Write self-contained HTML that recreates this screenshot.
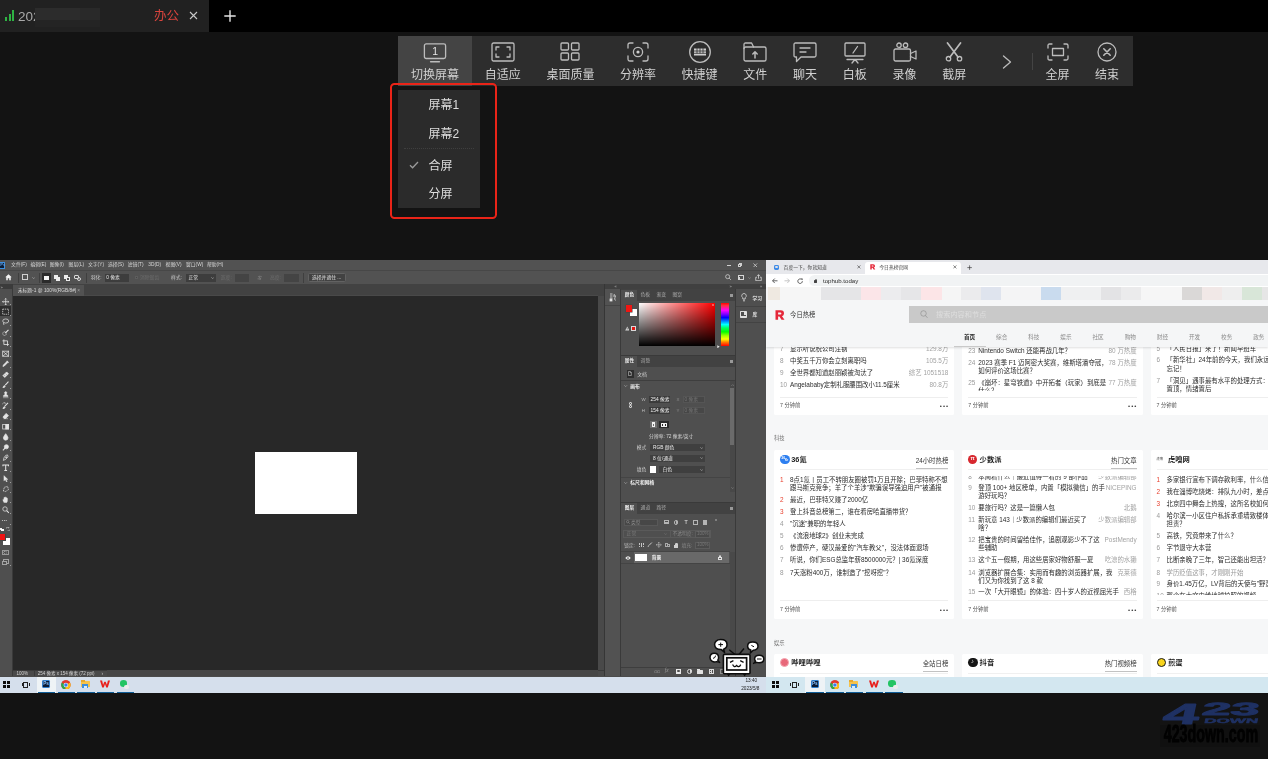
<!DOCTYPE html>
<html lang="zh-CN"><head><meta charset="utf-8"><title>remote</title>
<style>
html,body{margin:0;padding:0}
body{width:1268px;height:759px;overflow:hidden;background:#131313;position:relative;
font-family:"Liberation Sans","Noto Sans CJK SC",sans-serif;}
div,span,svg{position:absolute;box-sizing:border-box}
span{white-space:nowrap;line-height:1;display:block}
</style></head>
<body>
<div style="left:0;top:0;width:1268px;height:759px;overflow:hidden;will-change:transform">
<div style="left:0px;top:0px;width:1268px;height:32px;background:#000;"></div>
<div style="left:0px;top:0px;width:209px;height:32px;background:#212121;"></div>
<div style="left:5px;top:17px;width:2px;height:4px;background:#2fb344;"></div>
<div style="left:8.5px;top:13.5px;width:2px;height:7.5px;background:#2fb344;"></div>
<div style="left:12px;top:10px;width:2.3px;height:11px;background:#2fb344;"></div>
<span style="left:18px;top:9.5px;font-size:13.5px;color:#a9a9a9;">202</span>
<div style="left:35px;top:8px;width:65px;height:19px;background:#242424;"></div>
<div style="left:35px;top:8px;width:45px;height:12px;background:#2c2c2c;"></div>
<div style="left:80px;top:8px;width:20px;height:12px;background:#292929;"></div>
<span style="left:154px;top:9.5px;font-size:12.5px;color:#d9443d;">办公</span>
<svg style="left:189px;top:11px" width="9" height="9" viewBox="0 0 9 9"><path d="M1 1L8 8M8 1L1 8" stroke="#c8c8c8" stroke-width="1.1" fill="none"/></svg>
<svg style="left:223.6px;top:10px" width="12" height="12" viewBox="0 0 12 12"><path d="M6 0.3V11.7M0.3 6H11.7" stroke="#e4e4e4" stroke-width="1.4" fill="none"/></svg>
<div style="left:398px;top:36px;width:735px;height:49.5px;background:#2d2d2d;"></div>
<div style="left:398px;top:36px;width:74px;height:49.5px;background:#444444;"></div>
<span style="left:335px;width:200px;text-align:center;top:68.5px;font-size:12px;color:#d0d0d0;">切换屏幕</span>
<span style="left:402.8px;width:200px;text-align:center;top:68.5px;font-size:12px;color:#d0d0d0;">自适应</span>
<span style="left:470.4px;width:200px;text-align:center;top:68.5px;font-size:12px;color:#d0d0d0;">桌面质量</span>
<span style="left:537.9px;width:200px;text-align:center;top:68.5px;font-size:12px;color:#d0d0d0;">分辨率</span>
<span style="left:599.6px;width:200px;text-align:center;top:68.5px;font-size:12px;color:#d0d0d0;">快捷键</span>
<span style="left:655.3px;width:200px;text-align:center;top:68.5px;font-size:12px;color:#d0d0d0;">文件</span>
<span style="left:705px;width:200px;text-align:center;top:68.5px;font-size:12px;color:#d0d0d0;">聊天</span>
<span style="left:754.8px;width:200px;text-align:center;top:68.5px;font-size:12px;color:#d0d0d0;">白板</span>
<span style="left:804.5px;width:200px;text-align:center;top:68.5px;font-size:12px;color:#d0d0d0;">录像</span>
<span style="left:854.2px;width:200px;text-align:center;top:68.5px;font-size:12px;color:#d0d0d0;">截屏</span>
<span style="left:957.5px;width:200px;text-align:center;top:68.5px;font-size:12px;color:#d0d0d0;">全屏</span>
<span style="left:1007px;width:200px;text-align:center;top:68.5px;font-size:12px;color:#d0d0d0;">结束</span>
<div style="left:1032px;top:53px;width:1px;height:17px;background:#444;"></div>
<svg style="left:423px;top:42.4px" width="24" height="22" viewBox="0 0 24 22" fill="none" stroke="#bcbcbc" stroke-width="1.3" stroke-linecap="round" stroke-linejoin="round"><rect x="1.4" y="1.9" width="21.2" height="14.6" rx="1.8"/><path d="M7.6 19.8H16.4" stroke-width="1.5"/><text x="12.2" y="12.9" font-size="10.4" text-anchor="middle" fill="#e6e6e6" stroke="none" font-family="Liberation Sans,sans-serif">1</text></svg>
<svg style="left:490.8px;top:42px" width="24" height="20" viewBox="0 0 24 20" fill="none" stroke="#bcbcbc" stroke-width="1.3" stroke-linecap="round" stroke-linejoin="round"><rect x="1" y="1" width="22" height="18" rx="1.5"/><path d="M5 8V5H8M16 5H19V8M19 12V15H16M8 15H5V12"/></svg>
<svg style="left:560.4px;top:42px" width="20" height="19" viewBox="0 0 20 19" fill="none" stroke="#bcbcbc" stroke-width="1.3" stroke-linecap="round" stroke-linejoin="round"><rect x="1" y="1" width="7.5" height="7" rx="1"/><rect x="11.5" y="1" width="7.5" height="7" rx="1"/><rect x="1" y="11" width="7.5" height="7" rx="1"/><rect x="11.5" y="11" width="7.5" height="7" rx="1"/></svg>
<svg style="left:626.9px;top:42px" width="22" height="20" viewBox="0 0 22 20" fill="none" stroke="#bcbcbc" stroke-width="1.3" stroke-linecap="round" stroke-linejoin="round"><path d="M1 6V3Q1 1 3 1H6M16 1H19Q21 1 21 3V6M21 14V17Q21 19 19 19H16M6 19H3Q1 19 1 17V14"/><circle cx="11" cy="10" r="4.6"/><circle cx="11" cy="10" r="1.6" fill="#cfcfcf" stroke="none"/></svg>
<svg style="left:687.6px;top:41px" width="24" height="22" viewBox="0 0 24 22" fill="none" stroke="#bcbcbc" stroke-width="1.3" stroke-linecap="round" stroke-linejoin="round"><circle cx="12" cy="11" r="10.3"/><rect x="6" y="7.5" width="12" height="7" fill="#cfcfcf" stroke="none"/><path d="M6 10H18M6 12.3H18M9 7.5V12M12 7.5V12M15 7.5V12" stroke="#2d2d2d" stroke-width="0.8"/></svg>
<svg style="left:743.3px;top:42px" width="24" height="20" viewBox="0 0 24 20" fill="none" stroke="#bcbcbc" stroke-width="1.3" stroke-linecap="round" stroke-linejoin="round"><rect x="1" y="5" width="22" height="14" rx="1.6"/><path d="M1 6.5V2.5Q1 1 2.5 1H8.6L10.6 5"/><path d="M12 16V10M9.8 12L12 9.8L14.2 12" stroke-width="1.5"/></svg>
<svg style="left:793px;top:42px" width="24" height="21" viewBox="0 0 24 21" fill="none" stroke="#bcbcbc" stroke-width="1.3" stroke-linecap="round" stroke-linejoin="round"><path d="M2.5 1H21.5Q23 1 23 2.5V13.5Q23 15 21.5 15H8L3.5 19.5V15H2.5Q1 15 1 13.5V2.5Q1 1 2.5 1Z"/><path d="M7 6H17M7 10H13"/></svg>
<svg style="left:843.8px;top:42px" width="22" height="22" viewBox="0 0 22 22" fill="none" stroke="#bcbcbc" stroke-width="1.3" stroke-linecap="round" stroke-linejoin="round"><rect x="1" y="1" width="20" height="13" rx="1"/><path d="M3 17.5H19M8 21L11 17.5L14 21M9 11L13.5 4.5"/></svg>
<svg style="left:892.5px;top:42px" width="24" height="20" viewBox="0 0 24 20" fill="none" stroke="#bcbcbc" stroke-width="1.3" stroke-linecap="round" stroke-linejoin="round"><rect x="1" y="7" width="16.5" height="12" rx="1.5"/><path d="M17.5 11.5L23 9V17L17.5 14.5"/><circle cx="6" cy="3.2" r="2.2"/><circle cx="12.5" cy="3.2" r="2.2"/></svg>
<svg style="left:945.2px;top:42px" width="18" height="20" viewBox="0 0 18 20" fill="none" stroke="#bcbcbc" stroke-width="1.3" stroke-linecap="round" stroke-linejoin="round"><path d="M2.5 1L13 15M15.5 1L5 15" stroke-width="1.7"/><circle cx="3.5" cy="16.7" r="2.2"/><circle cx="14.5" cy="16.7" r="2.2"/></svg>
<svg style="left:1002px;top:54.5px" width="10" height="14" viewBox="0 0 10 14" fill="none" stroke="#bcbcbc" stroke-width="1.3" stroke-linecap="round" stroke-linejoin="round"><path d="M1.5 1L8.5 7L1.5 13"/></svg>
<svg style="left:1046.5px;top:43px" width="22" height="18" viewBox="0 0 22 18" fill="none" stroke="#bcbcbc" stroke-width="1.3" stroke-linecap="round" stroke-linejoin="round"><path d="M1 5V2.5Q1 1 2.5 1H5M17 1H19.5Q21 1 21 2.5V5M21 13V15.5Q21 17 19.5 17H17M5 17H2.5Q1 17 1 15.5V13"/><rect x="5.5" y="5.5" width="11" height="7"/></svg>
<svg style="left:1097px;top:42px" width="20" height="20" viewBox="0 0 20 20" fill="none" stroke="#bcbcbc" stroke-width="1.3" stroke-linecap="round" stroke-linejoin="round"><circle cx="10" cy="10" r="9"/><path d="M6.8 6.8L13.2 13.2M13.2 6.8L6.8 13.2" stroke-width="1.6"/></svg>
<div style="left:398px;top:89.5px;width:82px;height:118.5px;background:#2b2b2b;"></div>
<span style="left:428.5px;top:98.5px;font-size:12px;color:#dedede;">屏幕1</span>
<span style="left:428.5px;top:127.5px;font-size:12px;color:#dedede;">屏幕2</span>
<span style="left:428.5px;top:159.7px;font-size:12px;color:#dedede;">合屏</span>
<span style="left:428.5px;top:187.9px;font-size:12px;color:#dedede;">分屏</span>
<div style="left:404px;top:148px;width:70px;height:1px;background:transparent;border-top:1px dotted #3f3f3f;"></div>
<svg style="left:409px;top:160.5px" width="10" height="8" viewBox="0 0 10 8"><path d="M1 4.2L3.6 6.8L9 1" stroke="#9a9a9a" stroke-width="1.3" fill="none"/></svg>
<div style="left:389.9px;top:83px;width:107px;height:136.1px;background:transparent;border:2.6px solid #ea2418;border-radius:4.5px;"></div>
<div style="left:0px;top:260px;width:766px;height:432px;background:#4b4b4b;"></div>
<div style="left:0px;top:260px;width:766px;height:10.6px;background:#525252;"></div>
<div style="left:0px;top:261.5px;width:5.3px;height:7px;background:#0b1d36;border:0.8px solid #3d8fe0;border-left:none;"></div>
<span style="left:0.2px;top:262.9px;font-size:4.2px;color:#5f9ee0;font-weight:bold;">Ps</span>
<span style="left:11.1px;top:263.3px;font-size:4.8px;color:#d6d6d6;">文件(F)</span>
<span style="left:30.4px;top:263.3px;font-size:4.8px;color:#d6d6d6;">编辑(E)</span>
<span style="left:49.8px;top:263.3px;font-size:4.8px;color:#d6d6d6;">图像(I)</span>
<span style="left:68.6px;top:263.3px;font-size:4.8px;color:#d6d6d6;">图层(L)</span>
<span style="left:88px;top:263.3px;font-size:4.8px;color:#d6d6d6;">文字(Y)</span>
<span style="left:107.9px;top:263.3px;font-size:4.8px;color:#d6d6d6;">选择(S)</span>
<span style="left:127.8px;top:263.3px;font-size:4.8px;color:#d6d6d6;">滤镜(T)</span>
<span style="left:148.3px;top:263.3px;font-size:4.8px;color:#d6d6d6;">3D(D)</span>
<span style="left:165.6px;top:263.3px;font-size:4.8px;color:#d6d6d6;">视图(V)</span>
<span style="left:186px;top:263.3px;font-size:4.8px;color:#d6d6d6;">窗口(W)</span>
<span style="left:207px;top:263.3px;font-size:4.8px;color:#d6d6d6;">帮助(H)</span>
<div style="left:726.5px;top:265.4px;width:4px;height:0.8px;background:#d0d0d0;"></div>
<div style="left:738.5px;top:263.2px;width:3.2px;height:3.2px;background:transparent;border:0.6px solid #cfcfcf;"></div>
<div style="left:737.6px;top:264.2px;width:3.2px;height:3.2px;background:#525252;border:0.6px solid #cfcfcf;"></div>
<svg style="left:753px;top:262.6px" width="4.6" height="4.6" viewBox="0 0 5 5"><path d="M0.5 0.5L4.5 4.5M4.5 0.5L0.5 4.5" stroke="#d8d8d8" stroke-width="0.8"/></svg>
<div style="left:0px;top:271px;width:766px;height:13.4px;background:#525252;"></div>
<div style="left:0px;top:270.2px;width:766px;height:0.7px;background:#474747;"></div>
<svg style="left:4.8px;top:274.2px" width="7" height="6.6" viewBox="0 0 14 13"><path d="M7 0.5L0.5 6.5H2.5V12.5H5.5V8.5H8.5V12.5H11.5V6.5H13.5Z" fill="#f2f2f2"/></svg>
<div style="left:18.2px;top:272.5px;width:0.5px;height:10.5px;background:#3f3f3f;"></div>
<div style="left:21.8px;top:274.4px;width:6.6px;height:6px;background:transparent;border:0.8px dashed #cfcfcf;"></div>
<svg style="left:31.6px;top:277px" width="3.4" height="2.2" viewBox="0 0 6 4"><path d="M0.5 0.5L3 3L5.5 0.5" stroke="#bdbdbd" stroke-width="1" fill="none"/></svg>
<div style="left:38.6px;top:272.5px;width:0.5px;height:10.5px;background:#3f3f3f;"></div>
<div style="left:42px;top:273px;width:9px;height:9.6px;background:#2a2a2a;"></div>
<div style="left:44.4px;top:275.6px;width:4.2px;height:4.2px;background:#f4f4f4;"></div>
<div style="left:54px;top:275px;width:4px;height:4px;background:#ececec;"></div>
<div style="left:56px;top:277px;width:4px;height:4px;background:#ececec;"></div>
<div style="left:64.4px;top:275px;width:4px;height:4px;background:#ececec;"></div>
<div style="left:66.2px;top:276.8px;width:4.2px;height:4.2px;background:#525252;border:0.8px solid #ececec;"></div>
<div style="left:74.4px;top:275px;width:4.2px;height:4.2px;background:transparent;border:0.7px solid #d8d8d8;border-radius:1px;"></div>
<div style="left:76.6px;top:276.8px;width:4.4px;height:4.4px;background:transparent;border:0.7px solid #d8d8d8;border-radius:2.2px;"></div>
<div style="left:85.7px;top:272.5px;width:0.5px;height:10.5px;background:#3f3f3f;"></div>
<span style="left:90.7px;top:276.2px;font-size:4.8px;color:#cdcdcd;">羽化:</span>
<div style="left:105px;top:273.8px;width:24px;height:7.8px;background:#3d3d3d;"></div>
<span style="left:106.2px;top:276.2px;font-size:4.8px;color:#e6e6e6;">0 像素</span>
<span style="left:140px;top:276.2px;font-size:4.8px;color:#6c6c6c;">消除锯齿</span>
<div style="left:134.6px;top:275.6px;width:3.6px;height:3.6px;background:#454545;border:0.5px solid #5d5d5d;"></div>
<span style="left:171px;top:276.2px;font-size:4.8px;color:#cdcdcd;">样式:</span>
<div style="left:185.5px;top:273.8px;width:30px;height:7.8px;background:#3d3d3d;"></div>
<span style="left:188.4px;top:276.2px;font-size:4.8px;color:#e6e6e6;">正常</span>
<svg style="left:210.6px;top:277px" width="3.4" height="2.2" viewBox="0 0 6 4"><path d="M0.5 0.5L3 3L5.5 0.5" stroke="#bdbdbd" stroke-width="1" fill="none"/></svg>
<span style="left:220.8px;top:276.2px;font-size:4.8px;color:#6c6c6c;">宽度:</span>
<div style="left:235px;top:273.8px;width:14px;height:7.8px;background:#444;"></div>
<svg style="left:256.5px;top:274.6px" width="5.4" height="5.6" viewBox="0 0 10 10"><path d="M1 7H7M5 5L7 7L5 9M9 3H3M5 1L3 3L5 5" stroke="#8d8d8d" stroke-width="1.1" fill="none"/></svg>
<span style="left:270px;top:276.2px;font-size:4.8px;color:#6c6c6c;">高度:</span>
<div style="left:284px;top:273.8px;width:14.7px;height:7.8px;background:#444;"></div>
<div style="left:303.4px;top:272.5px;width:0.5px;height:10.5px;background:#3f3f3f;"></div>
<div style="left:307.6px;top:272.8px;width:38.4px;height:8.8px;background:#424242;border:0.6px solid #626262;border-radius:1.4px;"></div>
<span style="left:312px;top:276px;font-size:4.8px;color:#e2e2e2;">选择并遮住 ...</span>
<svg style="left:725.4px;top:274.4px" width="6.4" height="6.4" viewBox="0 0 12 12"><circle cx="5" cy="5" r="3.8" stroke="#d6d6d6" stroke-width="1.4" fill="none"/><path d="M8 8L11 11" stroke="#d6d6d6" stroke-width="1.6"/></svg>
<div style="left:737.8px;top:275px;width:5.8px;height:5.2px;background:transparent;border:0.8px solid #d6d6d6;"></div>
<div style="left:738.6px;top:276.6px;width:1.8px;height:2.8px;background:#d6d6d6;"></div>
<svg style="left:747.6px;top:276.8px" width="3.2" height="2.2" viewBox="0 0 6 4"><path d="M0.5 0.5L3 3L5.5 0.5" stroke="#a5a5a5" stroke-width="1" fill="none"/></svg>
<svg style="left:755.2px;top:273.6px" width="7" height="7.4" viewBox="0 0 14 14"><path d="M4 6H1.5V13H12.5V6H10M7 9V1M4.5 3.5L7 1L9.5 3.5" stroke="#e0e0e0" stroke-width="1.5" fill="none"/></svg>
<div style="left:0px;top:284.4px;width:766px;height:11.6px;background:#424242;"></div>
<div style="left:13.3px;top:285px;width:70.6px;height:11px;background:#525252;"></div>
<div style="left:83.9px;top:294.9px;width:514px;height:1.1px;background:#494949;"></div>
<span style="left:17.7px;top:289.1px;font-size:4.8px;color:#dadada;">未标题-1 @ 100%(RGB/8#)</span>
<span style="left:77.2px;top:289px;font-size:4.8px;color:#a5a5a5;">×</span>
<div style="left:12.4px;top:296px;width:585.6px;height:373.8px;background:#282828;"></div>
<div style="left:255px;top:452.2px;width:101.8px;height:62px;background:#ffffff;"></div>
<div style="left:598px;top:296px;width:6.8px;height:373.8px;background:#494949;"></div>
<div style="left:12.4px;top:669.8px;width:592.4px;height:6.4px;background:#4a4a4a;"></div>
<div style="left:12.4px;top:669.6px;width:592px;height:0.5px;background:#3a3a3a;"></div>
<span style="left:16.6px;top:671.7px;font-size:4.5px;color:#d2d2d2;">100%</span>
<div style="left:33.6px;top:670.4px;width:0.5px;height:5.4px;background:#3a3a3a;"></div>
<span style="left:37.8px;top:671.7px;font-size:4.5px;color:#d2d2d2;">254 像素 x 154 像素 (72 ppi)</span>
<span style="left:101.4px;top:671.1px;font-size:5px;color:#c0c0c0;">›</span>
<div style="left:106.6px;top:670.1px;width:491.4px;height:6.4px;background:#464646;"></div>
<div style="left:604.4px;top:284.4px;width:0.8px;height:392px;background:#363636;"></div>
<div style="left:0px;top:284.4px;width:12.4px;height:392px;background:#4f4f4f;"></div>
<div style="left:0px;top:284.4px;width:12.4px;height:4.8px;background:#3b3b3b;"></div>
<span style="left:0.6px;top:285.5px;font-size:4px;color:#b5b5b5;">»</span>
<div style="left:12.2px;top:284.4px;width:0.5px;height:392px;background:#3a3a3a;"></div>
<div style="left:0px;top:306.4px;width:10.6px;height:9.8px;background:#2e2e2e;"></div>
<svg style="left:1.7px;top:297.6px" width="7.4" height="7.4" viewBox="0 0 16 16" fill="none" stroke="#e4e4e4" stroke-width="1.6"><path d="M8 1V15M1 8H15M6 3L8 1L10 3M6 13L8 15L10 13M3 6L1 8L3 10M13 6L15 8L13 10"/></svg>
<div style="left:10px;top:304.3px;width:0.9px;height:0.9px;background:#9c9c9c;"></div>
<svg style="left:1.7px;top:308.03px" width="7.4" height="7.4" viewBox="0 0 16 16" fill="none" stroke="#e4e4e4" stroke-width="1.6"><rect x="1.5" y="2.5" width="13" height="11" stroke-dasharray="3 1.6"/></svg>
<div style="left:10px;top:314.73px;width:0.9px;height:0.9px;background:#9c9c9c;"></div>
<svg style="left:1.7px;top:318.46px" width="7.4" height="7.4" viewBox="0 0 16 16" fill="none" stroke="#e4e4e4" stroke-width="1.6"><ellipse cx="8" cy="6.5" rx="6.5" ry="4.5"/><path d="M4 10Q2 13 4.5 15"/></svg>
<div style="left:10px;top:325.16px;width:0.9px;height:0.9px;background:#9c9c9c;"></div>
<svg style="left:1.7px;top:328.89px" width="7.4" height="7.4" viewBox="0 0 16 16" fill="none" stroke="#e4e4e4" stroke-width="1.6"><circle cx="5.5" cy="10" r="4" stroke-dasharray="2.4 1.4"/><path d="M7 9L14 2" stroke-width="2.4"/></svg>
<div style="left:10px;top:335.59px;width:0.9px;height:0.9px;background:#9c9c9c;"></div>
<svg style="left:1.7px;top:339.32px" width="7.4" height="7.4" viewBox="0 0 16 16" fill="none" stroke="#e4e4e4" stroke-width="1.6"><path d="M4 1V12H15M1 4H12V15" stroke-width="1.8"/></svg>
<div style="left:10px;top:346.02px;width:0.9px;height:0.9px;background:#9c9c9c;"></div>
<svg style="left:1.7px;top:349.75px" width="7.4" height="7.4" viewBox="0 0 16 16" fill="none" stroke="#e4e4e4" stroke-width="1.6"><rect x="1.5" y="2.5" width="13" height="11"/><path d="M1.5 2.5L14.5 13.5M14.5 2.5L1.5 13.5"/></svg>
<div style="left:10px;top:356.45px;width:0.9px;height:0.9px;background:#9c9c9c;"></div>
<svg style="left:1.7px;top:360.18px" width="7.4" height="7.4" viewBox="0 0 16 16" fill="none" stroke="#e4e4e4" stroke-width="1.6"><path d="M2 14L3 11L10 4L12 6L5 13Z" fill="#e4e4e4"/><path d="M10 2L14 6" stroke-width="2.6"/></svg>
<div style="left:10px;top:366.88px;width:0.9px;height:0.9px;background:#9c9c9c;"></div>
<svg style="left:1.7px;top:370.61px" width="7.4" height="7.4" viewBox="0 0 16 16" fill="none" stroke="#e4e4e4" stroke-width="1.6"><path d="M2 10L10 2L14 6L6 14Z" fill="#e4e4e4"/><path d="M5 9L7 11M8 6L10 8" stroke="#4f4f4f" stroke-width="1"/></svg>
<div style="left:10px;top:377.31px;width:0.9px;height:0.9px;background:#9c9c9c;"></div>
<svg style="left:1.7px;top:381.04px" width="7.4" height="7.4" viewBox="0 0 16 16" fill="none" stroke="#e4e4e4" stroke-width="1.6"><path d="M14 1.5L7 9" stroke-width="2.2"/><path d="M2 14.5Q3 10 6 10Q8 12 5 14Q3.5 15 2 14.5Z" fill="#e4e4e4"/></svg>
<div style="left:10px;top:387.74px;width:0.9px;height:0.9px;background:#9c9c9c;"></div>
<svg style="left:1.7px;top:391.47px" width="7.4" height="7.4" viewBox="0 0 16 16" fill="none" stroke="#e4e4e4" stroke-width="1.6"><path d="M2 14.5H14M3 12H13V10Q9 9 9.6 6A2.6 2.6 0 1 0 6.4 6Q7 9 3 10Z" fill="#e4e4e4" stroke-width="1"/></svg>
<div style="left:10px;top:398.17px;width:0.9px;height:0.9px;background:#9c9c9c;"></div>
<svg style="left:1.7px;top:401.9px" width="7.4" height="7.4" viewBox="0 0 16 16" fill="none" stroke="#e4e4e4" stroke-width="1.6"><path d="M13 2L6 9" stroke-width="2.2"/><path d="M2 14.5Q3 10 6 10Q8 12 5 14Z" fill="#e4e4e4"/><path d="M1 5A4 4 0 0 1 7 2M5 1.5L7.2 2L6.6 4.2" stroke-width="1.1"/></svg>
<div style="left:10px;top:408.6px;width:0.9px;height:0.9px;background:#9c9c9c;"></div>
<svg style="left:1.7px;top:412.33px" width="7.4" height="7.4" viewBox="0 0 16 16" fill="none" stroke="#e4e4e4" stroke-width="1.6"><path d="M2 11L9 3L14 8L8 14H5Z" fill="#e4e4e4"/><path d="M3 14.5H13" stroke-width="1.2"/></svg>
<div style="left:10px;top:419.03px;width:0.9px;height:0.9px;background:#9c9c9c;"></div>
<svg style="left:1.7px;top:422.76px" width="7.4" height="7.4" viewBox="0 0 16 16" fill="none" stroke="#e4e4e4" stroke-width="1.6"><rect x="1.5" y="3" width="13" height="10"/><rect x="8" y="3" width="6.5" height="10" fill="#e4e4e4"/></svg>
<div style="left:10px;top:429.46px;width:0.9px;height:0.9px;background:#9c9c9c;"></div>
<svg style="left:1.7px;top:433.19px" width="7.4" height="7.4" viewBox="0 0 16 16" fill="none" stroke="#e4e4e4" stroke-width="1.6"><path d="M8 1.5Q13 8 13 10.5A5 5 0 0 1 3 10.5Q3 8 8 1.5Z" fill="#e4e4e4"/></svg>
<div style="left:10px;top:439.89px;width:0.9px;height:0.9px;background:#9c9c9c;"></div>
<svg style="left:1.7px;top:443.62px" width="7.4" height="7.4" viewBox="0 0 16 16" fill="none" stroke="#e4e4e4" stroke-width="1.6"><circle cx="9.5" cy="6" r="4.5" fill="#e4e4e4"/><path d="M6.5 9L2 14" stroke-width="2.4"/></svg>
<div style="left:10px;top:450.32px;width:0.9px;height:0.9px;background:#9c9c9c;"></div>
<svg style="left:1.7px;top:454.05px" width="7.4" height="7.4" viewBox="0 0 16 16" fill="none" stroke="#e4e4e4" stroke-width="1.6"><path d="M3 14Q3 8 8 3L12 2L13 6Q9 12 3 14Z"/><circle cx="9" cy="7" r="1.2" fill="#e4e4e4"/></svg>
<div style="left:10px;top:460.75px;width:0.9px;height:0.9px;background:#9c9c9c;"></div>
<svg style="left:1.7px;top:464.48px" width="7.4" height="7.4" viewBox="0 0 16 16" fill="none" stroke="#e4e4e4" stroke-width="1.6"><path d="M2 5V2H14V5M8 2V14M5 14H11" stroke-width="2.2"/></svg>
<div style="left:10px;top:471.18px;width:0.9px;height:0.9px;background:#9c9c9c;"></div>
<svg style="left:1.7px;top:474.91px" width="7.4" height="7.4" viewBox="0 0 16 16" fill="none" stroke="#e4e4e4" stroke-width="1.6"><path d="M4 1V13L7 10.5L9.5 15L11.5 14L9 9.6H13Z" fill="#e4e4e4" stroke-width="0.6"/></svg>
<div style="left:10px;top:481.61px;width:0.9px;height:0.9px;background:#9c9c9c;"></div>
<svg style="left:1.7px;top:485.34px" width="7.4" height="7.4" viewBox="0 0 16 16" fill="none" stroke="#e4e4e4" stroke-width="1.6"><path d="M3 13L5 5L12 3L14 10L8 14Z" stroke-dasharray="3 1.2"/></svg>
<div style="left:10px;top:492.04px;width:0.9px;height:0.9px;background:#9c9c9c;"></div>
<svg style="left:1.7px;top:495.77px" width="7.4" height="7.4" viewBox="0 0 16 16" fill="none" stroke="#e4e4e4" stroke-width="1.6"><path d="M4 14Q1 9 2 7L4 8V3.5Q5 2 6 3.5V2.5Q7 1 8 2.5V3Q9 1.8 10 3.2V4.5Q11 3.5 12 5V10Q12 13 10 14.5Z" fill="#e4e4e4" stroke-width="0.6"/></svg>
<div style="left:10px;top:502.47px;width:0.9px;height:0.9px;background:#9c9c9c;"></div>
<svg style="left:1.7px;top:506.2px" width="7.4" height="7.4" viewBox="0 0 16 16" fill="none" stroke="#e4e4e4" stroke-width="1.6"><circle cx="6.5" cy="6.5" r="4.8"/><path d="M10 10L15 15" stroke-width="2.2"/></svg>
<div style="left:10px;top:512.9px;width:0.9px;height:0.9px;background:#9c9c9c;"></div>
<span style="left:1.8px;top:518.63px;font-size:4px;color:#d4d4d4;letter-spacing:0.5px;">•••</span>
<div style="left:10px;top:523.93px;width:0.9px;height:0.9px;background:#9c9c9c;"></div>
<div style="left:0px;top:527.6px;width:2.4px;height:2.4px;background:#111;border:0.5px solid #eee;"></div>
<div style="left:1.4px;top:529px;width:2.4px;height:2.4px;background:#fff;"></div>
<svg style="left:6.2px;top:527px" width="4.2" height="4.2" viewBox="0 0 8 8"><path d="M1 3V1H6M4.5 0L6 1L4.5 2.4M7 5V7H3" stroke="#dcdcdc" stroke-width="0.9" fill="none"/></svg>
<div style="left:3px;top:538px;width:7.3px;height:7px;background:#ffffff;"></div>
<div style="left:0px;top:534.2px;width:6px;height:6.4px;background:#f01414;border-right:0.4px solid #444;border-bottom:0.4px solid #444;"></div>
<div style="left:1.6px;top:549.8px;width:7.4px;height:5.6px;background:transparent;border:0.6px solid #9a9a9a;"></div>
<div style="left:3.3px;top:551.2px;width:4px;height:2.8px;background:transparent;border:0.6px dotted #9a9a9a;border-radius:1.4px;"></div>
<div style="left:3.4px;top:559.4px;width:5.8px;height:4.2px;background:transparent;border:0.6px solid #a4a4a4;"></div>
<div style="left:1.6px;top:561px;width:5.8px;height:4.2px;background:#4f4f4f;border:0.6px solid #a4a4a4;"></div>
<div style="left:10px;top:565.4px;width:0.9px;height:0.9px;background:#9c9c9c;"></div>
<div style="left:605.2px;top:284.4px;width:160.8px;height:4.9px;background:#404040;"></div>
<span style="left:614.4px;top:284.5px;font-size:4px;color:#b0b0b0;">«</span>
<span style="left:729.6px;top:284.5px;font-size:4px;color:#b0b0b0;">»</span>
<span style="left:760px;top:284.5px;font-size:4px;color:#b0b0b0;">»</span>
<div style="left:605.2px;top:289.3px;width:14.6px;height:387px;background:#525252;"></div>
<div style="left:605.2px;top:305.2px;width:14.6px;height:0.6px;background:#444;"></div>
<svg style="left:609px;top:293px" width="8" height="9" viewBox="0 0 16 18" fill="none" stroke="#e2e2e2" stroke-width="1.6"><path d="M2 2H7M2 6H7M2 10H7"/><rect x="2" y="12" width="4" height="4" fill="#e2e2e2"/><path d="M10 3Q15 5 12 9Q10 12 13 15M10 3V8"/></svg>
<div style="left:619.8px;top:289.3px;width:1.4px;height:387px;background:#3a3a3a;"></div>
<div style="left:621.2px;top:289.3px;width:113.8px;height:387px;background:#4f4f4f;"></div>
<div style="left:621.2px;top:289.3px;width:113.8px;height:11.4px;background:#424242;"></div>
<div style="left:621.2px;top:289.6px;width:15.8px;height:11.2px;background:#4f4f4f;"></div>
<span style="left:624.8px;top:292.8px;font-size:4.6px;color:#ececec;font-weight:bold;">颜色</span>
<span style="left:640.4px;top:292.8px;font-size:4.8px;color:#a9a9a9;">色板</span>
<span style="left:656.4px;top:292.8px;font-size:4.8px;color:#a9a9a9;">渐变</span>
<span style="left:672.4px;top:292.8px;font-size:4.8px;color:#a9a9a9;">图案</span>
<div style="left:729.6px;top:293.6px;width:3.4px;height:0.6px;background:#999;"></div>
<div style="left:729.6px;top:294.8px;width:3.4px;height:0.6px;background:#999;"></div>
<div style="left:729.6px;top:296px;width:3.4px;height:0.6px;background:#999;"></div>
<div style="left:629.6px;top:308.9px;width:7.3px;height:7.4px;background:#ffffff;"></div>
<div style="left:625.6px;top:305.4px;width:6.8px;height:6.7px;background:#f01612;box-shadow:0 0 0 0.5px #454545;"></div>
<svg style="left:624.6px;top:326.2px" width="4.6" height="4.8" viewBox="0 0 10 10"><path d="M5 0.8L9.6 9.4H0.4Z" fill="#d8d8d8"/><path d="M5 3.6V6.6M5 7.4V8.4" stroke="#4f4f4f" stroke-width="1.2"/></svg>
<div style="left:631px;top:326.4px;width:4.8px;height:4.8px;background:#e01512;border:0.5px solid #d8d8d8;"></div>
<div style="left:639.3px;top:303.1px;width:75.4px;height:43.1px;background:#ff0000;background-image:linear-gradient(to bottom,rgba(0,0,0,0) 0%,rgba(0,0,0,1) 100%),linear-gradient(to right,#ffffff 0%,rgba(255,255,255,0) 100%);"></div>
<div style="left:712px;top:303.6px;width:2px;height:2px;background:transparent;border:0.4px solid #f0a0a0;border-radius:1px;"></div>
<div style="left:720.9px;top:303.1px;width:8.2px;height:43.1px;background:#f00;background:linear-gradient(to bottom,#ff0000 0%,#ff3040 6%,#ff00ff 17%,#7000ff 27%,#0000ff 34%,#0080ff 42%,#00ffff 50%,#00ff60 58%,#00ff00 67%,#a0ff00 76%,#ffff00 84%,#ff8000 91%,#ff0000 100%);"></div>
<svg style="left:717.4px;top:344.6px" width="3" height="3.4" viewBox="0 0 6 7"><path d="M0.5 0.5L5.5 3.5L0.5 6.5Z" fill="#f0f0f0"/></svg>
<div style="left:621.2px;top:355px;width:113.8px;height:0.9px;background:#3a3a3a;"></div>
<div style="left:621.2px;top:355.8px;width:113.8px;height:11px;background:#424242;"></div>
<div style="left:621.2px;top:356px;width:15.8px;height:11px;background:#4f4f4f;"></div>
<span style="left:624.8px;top:359.3px;font-size:4.6px;color:#ececec;font-weight:bold;">属性</span>
<span style="left:640.6px;top:359.3px;font-size:4.8px;color:#a0a0a0;">调整</span>
<div style="left:729.6px;top:360px;width:3.4px;height:0.6px;background:#999;"></div>
<div style="left:729.6px;top:361.2px;width:3.4px;height:0.6px;background:#999;"></div>
<div style="left:729.6px;top:362.4px;width:3.4px;height:0.6px;background:#999;"></div>
<div style="left:626.8px;top:370.2px;width:6.8px;height:7.4px;background:#2e2e2e;"></div>
<svg style="left:628.4px;top:371.2px" width="3.8" height="5.2" viewBox="0 0 8 10"><path d="M1 0.8H5L7 2.8V9.2H1Z M5 0.8V2.8H7" stroke="#f0f0f0" stroke-width="1" fill="none"/></svg>
<span style="left:637.2px;top:373.3px;font-size:4.8px;color:#d8d8d8;">文档</span>
<div style="left:621.2px;top:380.3px;width:113.8px;height:0.6px;background:#3e3e3e;"></div>
<svg style="left:624.4px;top:385.4px" width="3.4" height="2.2" viewBox="0 0 6 4"><path d="M0.5 0.5L3 3L5.5 0.5" stroke="#bdbdbd" stroke-width="1" fill="none"/></svg>
<span style="left:630.3px;top:384.6px;font-size:4.8px;color:#f0f0f0;font-weight:bold;">画布</span>
<div style="left:729.8px;top:381px;width:5.2px;height:111px;background:#484848;"></div>
<svg style="left:730.6px;top:384px" width="3.4" height="2.2" viewBox="0 0 6 4"><path d="M0.5 3.5L3 1L5.5 3.5" stroke="#8d8d8d" stroke-width="1" fill="none"/></svg>
<div style="left:730.2px;top:388px;width:4.2px;height:57px;background:#6b6b6b;"></div>
<svg style="left:730.6px;top:486.6px" width="3.4" height="2.2" viewBox="0 0 6 4"><path d="M0.5 0.5L3 3L5.5 0.5" stroke="#8d8d8d" stroke-width="1" fill="none"/></svg>
<span style="left:641.4px;top:398px;font-size:4.4px;color:#bdbdbd;">W</span>
<div style="left:649.1px;top:396px;width:21.3px;height:7px;background:#3b3b3b;"></div>
<span style="left:650.6px;top:398px;font-size:4.8px;color:#f0f0f0;">254 像素</span>
<span style="left:676.6px;top:398px;font-size:4.4px;color:#8c8c8c;">X</span>
<div style="left:682.8px;top:396px;width:22.4px;height:7px;background:#474747;border:0.4px solid #555;"></div>
<span style="left:684.4px;top:398px;font-size:4.8px;color:#737373;">0 像素</span>
<span style="left:641.8px;top:409.4px;font-size:4.4px;color:#bdbdbd;">H</span>
<div style="left:649.1px;top:407.4px;width:21.3px;height:7px;background:#3b3b3b;"></div>
<span style="left:650.6px;top:409.4px;font-size:4.8px;color:#f0f0f0;">154 像素</span>
<span style="left:676.6px;top:409.4px;font-size:4.4px;color:#8c8c8c;">Y</span>
<div style="left:682.8px;top:407.4px;width:22.4px;height:7px;background:#474747;border:0.4px solid #555;"></div>
<span style="left:684.4px;top:409.4px;font-size:4.8px;color:#737373;">0 像素</span>
<div style="left:629.2px;top:402.2px;width:2.6px;height:3px;background:transparent;border:0.6px solid #d0d0d0;border-radius:1px;"></div>
<div style="left:629.2px;top:405px;width:2.6px;height:3px;background:transparent;border:0.6px solid #d0d0d0;border-radius:1px;"></div>
<div style="left:650.1px;top:421px;width:6.9px;height:7.4px;background:#6e6e6e;"></div>
<div style="left:652px;top:422.4px;width:3px;height:4.6px;background:#f0f0f0;"></div>
<div style="left:652.9px;top:424.2px;width:1.2px;height:2px;background:#6e6e6e;"></div>
<div style="left:659.3px;top:421px;width:9.3px;height:7.4px;background:#2b2b2b;"></div>
<div style="left:661.2px;top:422.8px;width:5.6px;height:3.8px;background:transparent;border:0.6px solid #f0f0f0;"></div>
<div style="left:663.2px;top:424.2px;width:1.6px;height:1.8px;background:#f0f0f0;"></div>
<span style="left:649.1px;top:435.2px;font-size:4.8px;color:#d6d6d6;">分辨率: 72 像素/英寸</span>
<span style="left:636.7px;top:445.5px;font-size:4.8px;color:#cfcfcf;">模式</span>
<div style="left:650.1px;top:444.2px;width:55.1px;height:6.9px;background:#3f3f3f;"></div>
<span style="left:653.1px;top:446.15px;font-size:4.8px;color:#ededed;">RGB 颜色</span>
<svg style="left:700px;top:446.65px" width="3.4" height="2.2" viewBox="0 0 6 4"><path d="M0.5 0.5L3 3L5.5 0.5" stroke="#bdbdbd" stroke-width="1" fill="none"/></svg>
<div style="left:650.1px;top:455px;width:55.1px;height:6.9px;background:#3f3f3f;"></div>
<span style="left:653.1px;top:456.95px;font-size:4.8px;color:#ededed;">8 位/通道</span>
<svg style="left:700px;top:457.45px" width="3.4" height="2.2" viewBox="0 0 6 4"><path d="M0.5 0.5L3 3L5.5 0.5" stroke="#bdbdbd" stroke-width="1" fill="none"/></svg>
<span style="left:636.7px;top:468.2px;font-size:4.8px;color:#cfcfcf;">填色</span>
<div style="left:649.7px;top:466.2px;width:6.7px;height:6.6px;background:#ffffff;"></div>
<div style="left:659.4px;top:465.8px;width:45.6px;height:7.4px;background:#3f3f3f;"></div>
<span style="left:662.4px;top:468px;font-size:4.8px;color:#ededed;">白色</span>
<svg style="left:699.8px;top:468.5px" width="3.4" height="2.2" viewBox="0 0 6 4"><path d="M0.5 0.5L3 3L5.5 0.5" stroke="#bdbdbd" stroke-width="1" fill="none"/></svg>
<div style="left:621.2px;top:477.2px;width:108.6px;height:0.5px;background:#444;"></div>
<svg style="left:624.4px;top:482.2px" width="3.4" height="2.2" viewBox="0 0 6 4"><path d="M0.5 0.5L3 3L5.5 0.5" stroke="#bdbdbd" stroke-width="1" fill="none"/></svg>
<span style="left:630.3px;top:481.2px;font-size:4.8px;color:#f0f0f0;font-weight:bold;">标尺和网格</span>
<div style="left:621.2px;top:501.7px;width:113.8px;height:1px;background:#3a3a3a;"></div>
<div style="left:621.2px;top:502.7px;width:113.8px;height:11.4px;background:#424242;"></div>
<div style="left:621.2px;top:503px;width:15.8px;height:11.2px;background:#4f4f4f;"></div>
<span style="left:624.8px;top:506.2px;font-size:4.6px;color:#ececec;font-weight:bold;">图层</span>
<span style="left:640.6px;top:506.2px;font-size:4.8px;color:#a9a9a9;">通道</span>
<span style="left:656.4px;top:506.2px;font-size:4.8px;color:#a9a9a9;">路径</span>
<div style="left:729.6px;top:507px;width:3.4px;height:0.6px;background:#999;"></div>
<div style="left:729.6px;top:508.2px;width:3.4px;height:0.6px;background:#999;"></div>
<div style="left:729.6px;top:509.4px;width:3.4px;height:0.6px;background:#999;"></div>
<div style="left:624px;top:518.6px;width:33.6px;height:7.6px;background:#474747;border:0.4px solid #585858;"></div>
<svg style="left:625.6px;top:520.4px" width="4" height="4" viewBox="0 0 12 12"><circle cx="5" cy="5" r="3.6" stroke="#9c9c9c" stroke-width="1.5" fill="none"/><path d="M8 8L11 11" stroke="#9c9c9c" stroke-width="1.6"/></svg>
<span style="left:631px;top:521px;font-size:4.8px;color:#8a8a8a;">类型</span>
<div style="left:664.2px;top:520.4px;width:4.6px;height:3.8px;background:transparent;border:0.6px solid #b4b4b4;"></div>
<div style="left:665.2px;top:522px;width:2.4px;height:1.4px;background:#b4b4b4;"></div>
<div style="left:673.8px;top:520.2px;width:4.4px;height:4.4px;background:transparent;border:0.6px solid #b4b4b4;border-radius:2.2px;"></div>
<div style="left:676px;top:520.4px;width:2px;height:4px;background:#b4b4b4;border-radius:0 2px 2px 0;"></div>
<span style="left:684.4px;top:519.8px;font-size:5.2px;color:#c4c4c4;font-weight:bold;">T</span>
<div style="left:693.2px;top:520.2px;width:4.4px;height:4.4px;background:transparent;border:0.7px dashed #b4b4b4;"></div>
<div style="left:703px;top:520.2px;width:3.6px;height:4.4px;background:#b4b4b4;"></div>
<div style="left:704.6px;top:522.2px;width:2.8px;height:2.6px;background:#4f4f4f;border:0.5px solid #b4b4b4;"></div>
<div style="left:714.6px;top:519px;width:2.2px;height:2.2px;background:#8f8f8f;border-radius:1.1px;"></div>
<div style="left:623.2px;top:529.8px;width:88px;height:8.6px;background:transparent;border:0.4px solid #5a5a5a;"></div>
<span style="left:626.6px;top:531.7px;font-size:4.8px;color:#7d7d7d;">正常</span>
<svg style="left:664px;top:533.2px" width="3.4" height="2.2" viewBox="0 0 6 4"><path d="M0.5 0.5L3 3L5.5 0.5" stroke="#777" stroke-width="1" fill="none"/></svg>
<div style="left:669.6px;top:530.4px;width:0.4px;height:7.4px;background:#5a5a5a;"></div>
<span style="left:672.4px;top:531.7px;font-size:4.8px;color:#858585;">不透明度:</span>
<div style="left:695px;top:530.8px;width:15px;height:6.8px;background:#4a4a4a;border:0.4px solid #5c5c5c;"></div>
<span style="left:697px;top:531.9px;font-size:4.5px;color:#777;">100%</span>
<span style="left:624px;top:543.6px;font-size:4.8px;color:#b9b9b9;">锁定:</span>
<div style="left:639.4px;top:543px;width:4.2px;height:4.2px;background:transparent;border:0.6px dotted #c4c4c4;"></div>
<div style="left:640.6px;top:544.2px;width:1.8px;height:1.8px;background:#c4c4c4;"></div>
<svg style="left:647.4px;top:542.4px" width="5.4" height="5.4" viewBox="0 0 10 10"><path d="M9 1L3.5 6.5" stroke="#d0d0d0" stroke-width="1.8"/><path d="M1 9Q1.5 6.5 3.5 6.5Q4.5 8 2.5 9Z" fill="#d0d0d0"/></svg>
<svg style="left:656.2px;top:542.4px" width="5.6" height="5.6" viewBox="0 0 10 10"><path d="M5 0.5V9.5M0.5 5H9.5M3.6 2L5 0.5L6.4 2M3.6 8L5 9.5L6.4 8M2 3.6L0.5 5L2 6.4M8 3.6L9.5 5L8 6.4" stroke="#c8c8c8" stroke-width="1" fill="none"/></svg>
<div style="left:665.4px;top:543px;width:2.6px;height:4.2px;background:transparent;border:0.6px solid #aaa;"></div>
<div style="left:667.2px;top:544.4px;width:2.6px;height:2.8px;background:transparent;border:0.6px solid #aaa;"></div>
<div style="left:674.4px;top:544.6px;width:4px;height:3px;background:#cfcfcf;"></div>
<div style="left:675.2px;top:542.8px;width:2.4px;height:2.6px;background:transparent;border:0.6px solid #cfcfcf;border-radius:1.2px 1.2px 0 0;"></div>
<span style="left:681.5px;top:543.6px;font-size:4.8px;color:#858585;">填充:</span>
<div style="left:695px;top:541.8px;width:15px;height:6.8px;background:#4a4a4a;border:0.4px solid #5c5c5c;"></div>
<span style="left:697px;top:542.9px;font-size:4.5px;color:#777;">100%</span>
<div style="left:621.2px;top:551.3px;width:108.6px;height:0.5px;background:#444;"></div>
<div style="left:634px;top:551.8px;width:94.6px;height:11.6px;background:#696969;"></div>
<svg style="left:624.6px;top:555.6px" width="6" height="4" viewBox="0 0 12 8"><path d="M0.5 4Q6 -3 11.5 4Q6 11 0.5 4Z" fill="#f0f0f0"/><circle cx="6" cy="4" r="1.7" fill="#4f4f4f"/></svg>
<div style="left:635.4px;top:553.6px;width:12px;height:7.5px;background:#ffffff;"></div>
<span style="left:651.8px;top:556px;font-size:4.8px;color:#f4f4f4;font-weight:bold;">背景</span>
<div style="left:718.4px;top:556.8px;width:3.8px;height:3px;background:transparent;border:0.6px solid #e0e0e0;"></div>
<div style="left:719.2px;top:555px;width:2.2px;height:2.6px;background:transparent;border:0.6px solid #e0e0e0;border-radius:1.1px 1.1px 0 0;"></div>
<div style="left:621.2px;top:563.4px;width:108.6px;height:0.5px;background:#444;"></div>
<div style="left:729.8px;top:551.8px;width:5.2px;height:115px;background:#494949;"></div>
<div style="left:621.2px;top:666.8px;width:113.8px;height:0.6px;background:#3e3e3e;"></div>
<svg style="left:653.6px;top:669.6px" width="6.4" height="3.4" viewBox="0 0 12 6"><rect x="0.6" y="1" width="5.6" height="4" rx="2" stroke="#8c8c8c" stroke-width="1.1" fill="none"/><rect x="5.8" y="1" width="5.6" height="4" rx="2" stroke="#8c8c8c" stroke-width="1.1" fill="none"/></svg>
<span style="left:664.8px;top:668.4px;font-size:5.2px;color:#9a9a9a;font-style:italic;font-family:'Liberation Serif',serif;">fx</span>
<div style="left:675.6px;top:669px;width:5.8px;height:4.8px;background:#e8e8e8;"></div>
<div style="left:677.4px;top:670.2px;width:2.2px;height:2.2px;background:#4f4f4f;border-radius:1.1px;"></div>
<div style="left:687.2px;top:668.8px;width:4.8px;height:4.8px;background:transparent;border:0.7px solid #dcdcdc;border-radius:2.4px;"></div>
<div style="left:689.6px;top:669px;width:2.4px;height:4.4px;background:#dcdcdc;border-radius:0 2.4px 2.4px 0;"></div>
<div style="left:697.4px;top:669.8px;width:6px;height:4px;background:#e2e2e2;border-radius:0.5px;"></div>
<div style="left:697.4px;top:669px;width:2.6px;height:1.4px;background:#e2e2e2;"></div>
<div style="left:708.8px;top:668.8px;width:4.8px;height:4.8px;background:transparent;border:0.7px solid #dcdcdc;"></div>
<div style="left:710.7px;top:670px;width:1px;height:2.6px;background:#dcdcdc;"></div>
<div style="left:709.9px;top:670.8px;width:2.6px;height:1px;background:#dcdcdc;"></div>
<div style="left:720.2px;top:669.6px;width:3.8px;height:4.4px;background:transparent;border:0.6px solid #8f8f8f;border-top:none;"></div>
<div style="left:719.6px;top:668.8px;width:5px;height:0.7px;background:#8f8f8f;"></div>
<div style="left:735px;top:289.3px;width:1.4px;height:387px;background:#3a3a3a;"></div>
<div style="left:736.4px;top:289.3px;width:29.6px;height:387px;background:#4f4f4f;"></div>
<div style="left:736.4px;top:305.6px;width:29.6px;height:0.6px;background:#434343;"></div>
<div style="left:736.4px;top:322.2px;width:29.6px;height:0.6px;background:#434343;"></div>
<svg style="left:740.6px;top:293.4px" width="6" height="8.4" viewBox="0 0 12 17" fill="none" stroke="#eaeaea" stroke-width="1.4"><path d="M6 1A4.6 4.6 0 0 1 8.6 9.4V12H3.4V9.4A4.6 4.6 0 0 1 6 1Z"/><path d="M4 14.4H8M4.6 16.2H7.4"/></svg>
<span style="left:752.4px;top:297px;font-size:4.8px;color:#e0e0e0;font-weight:bold;">学习</span>
<div style="left:740.4px;top:311.2px;width:6.4px;height:6.4px;background:transparent;border:0.8px solid #e0e0e0;border-radius:0.8px;"></div>
<div style="left:744px;top:312px;width:2px;height:3px;background:#e0e0e0;"></div>
<div style="left:740.4px;top:315.6px;width:6.4px;height:0.7px;background:#e0e0e0;"></div>
<span style="left:752.4px;top:313.2px;font-size:4.8px;color:#e0e0e0;font-weight:bold;">库</span>
<div style="left:766px;top:260px;width:502px;height:432px;background:#f6f7f8;"></div>
<div style="left:774px;top:330px;width:180.3px;height:84.8px;background:#ffffff;overflow:hidden;border-radius:1.5px;"><div style="left:0;top:10px;width:180.3px;height:54px;overflow:hidden"><span style="left:6px;top:6px;font-size:6.4px;color:#9a9a9a;">7</span><span style="left:16px;top:6px;font-size:6.4px;color:#2a2a2a;">显示听说税公司注钢</span><span style="right:6px;top:6px;font-size:6.4px;color:#a3a3a3;">129.8万</span><span style="left:6px;top:18px;font-size:6.4px;color:#9a9a9a;">8</span><span style="left:16px;top:18px;font-size:6.4px;color:#2a2a2a;">中奖五千万你会立刻离职吗</span><span style="right:6px;top:18px;font-size:6.4px;color:#a3a3a3;">105.5万</span><span style="left:6px;top:30px;font-size:6.4px;color:#9a9a9a;">9</span><span style="left:16px;top:30px;font-size:6.4px;color:#2a2a2a;">全世界都知道赵丽颖被淘汰了</span><span style="right:6px;top:30px;font-size:6.4px;color:#a3a3a3;">综艺 1051518</span><span style="left:6px;top:42px;font-size:6.4px;color:#9a9a9a;">10</span><span style="left:16px;top:42px;font-size:6.4px;color:#2a2a2a;">Angelababy定制礼服腰围改小11.5厘米</span><span style="right:6px;top:42px;font-size:6.4px;color:#a3a3a3;">80.8万</span></div><div style="left:6px;top:66.5px;width:168.3px;height:0.7px;background:#eeeeee"></div><span style="left:6px;top:73.1px;font-size:5.3px;color:#555;">7 分钟前</span><span style="right:5.2px;top:73.1px;font-size:6px;color:#3a3a3a;letter-spacing:1px;">•••</span></div>
<div style="left:962.3px;top:330px;width:180.3px;height:84.8px;background:#ffffff;overflow:hidden;border-radius:1.5px;"><div style="left:0;top:10px;width:180.3px;height:50.6px;overflow:hidden"><span style="left:6px;top:8px;font-size:6.4px;color:#9a9a9a;">23</span><span style="left:16px;top:8px;font-size:6.4px;color:#2a2a2a;">Nintendo Switch 还能再战几年？</span><span style="right:6px;top:8px;font-size:6.4px;color:#a3a3a3;">80 万热度</span><span style="left:6px;top:20px;font-size:6.4px;color:#9a9a9a;">24</span><span style="left:16px;top:20px;font-size:6.4px;color:#2a2a2a;">2023 赛季 F1 迈阿密大奖赛，维斯塔潘夺冠，</span><span style="left:16px;top:28px;font-size:6.4px;color:#2a2a2a;">如何评价这场比赛？</span><span style="right:6px;top:20px;font-size:6.4px;color:#a3a3a3;">78 万热度</span><span style="left:6px;top:40px;font-size:6.4px;color:#9a9a9a;">25</span><span style="left:16px;top:40px;font-size:6.4px;color:#2a2a2a;">《崩坏：星穹铁道》中开拓者（玩家）到底是</span><span style="left:16px;top:48px;font-size:6.4px;color:#2a2a2a;">什么？</span><span style="right:6px;top:40px;font-size:6.4px;color:#a3a3a3;">77 万热度</span></div><div style="left:6px;top:66.5px;width:168.3px;height:0.7px;background:#eeeeee"></div><span style="left:6px;top:73.1px;font-size:5.3px;color:#555;">7 分钟前</span><span style="right:5.2px;top:73.1px;font-size:6px;color:#3a3a3a;letter-spacing:1px;">•••</span></div>
<div style="left:1150.6px;top:330px;width:180.3px;height:84.8px;background:#ffffff;overflow:hidden;border-radius:1.5px;"><div style="left:0;top:10px;width:180.3px;height:54px;overflow:hidden"><span style="left:6px;top:6px;font-size:6.4px;color:#9a9a9a;">5</span><span style="left:16px;top:6px;font-size:6.4px;color:#2a2a2a;">「人民日报」来了！新闻早班车</span><span style="left:6px;top:17px;font-size:6.4px;color:#9a9a9a;">6</span><span style="left:16px;top:17px;font-size:6.4px;color:#2a2a2a;">「新华社」24年前的今天，我们永远不能</span><span style="left:16px;top:26px;font-size:6.4px;color:#2a2a2a;">忘记！</span><span style="left:6px;top:38px;font-size:6.4px;color:#9a9a9a;">7</span><span style="left:16px;top:38px;font-size:6.4px;color:#2a2a2a;">「洞见」遇事最有水平的处理方式：事情</span><span style="left:16px;top:46px;font-size:6.4px;color:#2a2a2a;">置顶，情绪置后</span></div><div style="left:6px;top:66.5px;width:168.3px;height:0.7px;background:#eeeeee"></div><span style="left:6px;top:73.1px;font-size:5.3px;color:#555;">7 分钟前</span><span style="right:5.2px;top:73.1px;font-size:6px;color:#3a3a3a;letter-spacing:1px;">•••</span></div>
<span style="left:774px;top:436.2px;font-size:5.3px;color:#777;">科技</span>
<div style="left:774px;top:450px;width:180.3px;height:169px;background:#ffffff;overflow:hidden;border-radius:1.5px;"><div style="left:0;top:0px;width:180.3px;height:24px"><div style="left:6px;top:4.6px;width:9.6px;height:9.6px;border-radius:4.8px;background:#2d7ff0"></div><span style="left:7.3px;top:7.2px;font-size:3.4px;color:#fff;font-weight:bold;">36</span><span style="left:10.9px;top:8.6px;font-size:3px;color:#fff;font-weight:bold;">Kr</span><span style="left:17.3px;top:5.6px;font-size:7.3px;color:#1c1c1c;font-weight:bold;">36氪</span><span style="right:6px;top:7.6px;font-size:6.4px;color:#333;border-bottom:1.2px solid #c2c2c2;padding-bottom:4px;">24小时热榜</span><div style="left:6px;top:19.4px;width:168.3px;height:0.6px;background:#f0f0f0"></div></div><div style="left:0;top:20px;width:180.3px;height:127px;overflow:hidden"><span style="left:6px;top:7px;font-size:6.4px;color:#e8412f;">1</span><span style="left:16px;top:7px;font-size:6.4px;color:#2a2a2a;">8点1氪丨员工不转朋友圈被罚1万且开除；巴菲特称不想</span><span style="left:16px;top:15px;font-size:6.4px;color:#2a2a2a;">跟马斯克竞争；羊了个羊涉"欺骗误导强迫用户"被通报</span><span style="left:6px;top:27px;font-size:6.4px;color:#e8412f;">2</span><span style="left:16px;top:27px;font-size:6.4px;color:#2a2a2a;">最近，巴菲特又赚了2000亿</span><span style="left:6px;top:39px;font-size:6.4px;color:#e8412f;">3</span><span style="left:16px;top:39px;font-size:6.4px;color:#2a2a2a;">登上抖音总榜第二，谁在看房哈直播带货？</span><span style="left:6px;top:51px;font-size:6.4px;color:#9a9a9a;">4</span><span style="left:16px;top:51px;font-size:6.4px;color:#2a2a2a;">"沉迷"兼职的年轻人</span><span style="left:6px;top:63px;font-size:6.4px;color:#9a9a9a;">5</span><span style="left:16px;top:63px;font-size:6.4px;color:#2a2a2a;">《流浪地球2》创业未完成</span><span style="left:6px;top:75px;font-size:6.4px;color:#9a9a9a;">6</span><span style="left:16px;top:75px;font-size:6.4px;color:#2a2a2a;">惨遭停产，硬汉最爱的"汽车教父"，没法体面退场</span><span style="left:6px;top:87px;font-size:6.4px;color:#9a9a9a;">7</span><span style="left:16px;top:87px;font-size:6.4px;color:#2a2a2a;">听说，你们ESG总监年薪8500000元？| 36氪深度</span><span style="left:6px;top:100px;font-size:6.4px;color:#9a9a9a;">8</span><span style="left:16px;top:100px;font-size:6.4px;color:#2a2a2a;">7天涨粉400万，谁制造了"挖呀挖"？</span></div><div style="left:6px;top:150px;width:168.3px;height:0.7px;background:#eeeeee"></div><span style="left:6px;top:156.6px;font-size:5.3px;color:#555;">7 分钟前</span><span style="right:5.2px;top:156.6px;font-size:6px;color:#3a3a3a;letter-spacing:1px;">•••</span></div>
<div style="left:962.3px;top:450px;width:180.3px;height:169px;background:#ffffff;overflow:hidden;border-radius:1.5px;"><div style="left:0;top:0px;width:180.3px;height:24px"><div style="left:6px;top:5px;width:8.8px;height:8.8px;border-radius:4.4px;background:#d7282f"></div><span style="left:8.2px;top:6.4px;font-size:5.4px;color:#fff;font-weight:bold;">π</span><span style="left:17.3px;top:5.6px;font-size:7.3px;color:#1c1c1c;font-weight:bold;">少数派</span><span style="right:6px;top:7.6px;font-size:6.4px;color:#333;border-bottom:1.2px solid #c2c2c2;padding-bottom:4px;">热门文章</span><div style="left:6px;top:19.4px;width:168.3px;height:0.6px;background:#f0f0f0"></div></div><div style="left:0;top:25.8px;width:180.3px;height:121.2px;overflow:hidden"><span style="left:6px;top:-1.8px;font-size:6.4px;color:#9a9a9a;">8</span><span style="left:16px;top:-1.8px;font-size:6.4px;color:#2a2a2a;">本周看什么｜最近值得一看的 9 部作品</span><span style="right:6px;top:-1.8px;font-size:6.4px;color:#a3a3a3;">少数派编辑部</span><span style="left:6px;top:9.2px;font-size:6.4px;color:#9a9a9a;">9</span><span style="left:16px;top:9.2px;font-size:6.4px;color:#2a2a2a;">登顶 100+ 地区榜单，内置「模拟微信」的手</span><span style="left:16px;top:17.2px;font-size:6.4px;color:#2a2a2a;">游好玩吗？</span><span style="right:6px;top:9.2px;font-size:6.4px;color:#a3a3a3;">NICEPING</span><span style="left:6px;top:29.2px;font-size:6.4px;color:#9a9a9a;">10</span><span style="left:16px;top:29.2px;font-size:6.4px;color:#2a2a2a;">要旅行吗？这是一篇懒人包</span><span style="right:6px;top:29.2px;font-size:6.4px;color:#a3a3a3;">北鹅</span><span style="left:6px;top:41.2px;font-size:6.4px;color:#9a9a9a;">11</span><span style="left:16px;top:41.2px;font-size:6.4px;color:#2a2a2a;">新玩意 143｜少数派的编辑们最近买了</span><span style="left:16px;top:49.2px;font-size:6.4px;color:#2a2a2a;">啥？</span><span style="right:6px;top:41.2px;font-size:6.4px;color:#a3a3a3;">少数派编辑部</span><span style="left:6px;top:61.2px;font-size:6.4px;color:#9a9a9a;">12</span><span style="left:16px;top:61.2px;font-size:6.4px;color:#2a2a2a;">把宝贵的时间留给佳作，追剧观影少不了这</span><span style="left:16px;top:69.2px;font-size:6.4px;color:#2a2a2a;">些辅助</span><span style="right:6px;top:61.2px;font-size:6.4px;color:#a3a3a3;">PostMendy</span><span style="left:6px;top:81.2px;font-size:6.4px;color:#9a9a9a;">13</span><span style="left:16px;top:81.2px;font-size:6.4px;color:#2a2a2a;">这个五一假期，用这些居家好物舒服一夏</span><span style="right:6px;top:81.2px;font-size:6.4px;color:#a3a3a3;">吃涼的水獭</span><span style="left:6px;top:94.2px;font-size:6.4px;color:#9a9a9a;">14</span><span style="left:16px;top:94.2px;font-size:6.4px;color:#2a2a2a;">浏览器扩展合集：实用而有趣的浏览器扩展，我</span><span style="left:16px;top:102.2px;font-size:6.4px;color:#2a2a2a;">们又为你找到了这 8 款</span><span style="right:6px;top:94.2px;font-size:6.4px;color:#a3a3a3;">克莱德</span><span style="left:6px;top:113.2px;font-size:6.4px;color:#9a9a9a;">15</span><span style="left:16px;top:113.2px;font-size:6.4px;color:#2a2a2a;">一次「大开眼镜」的体验：四十岁人的近视屈光手</span><span style="right:6px;top:113.2px;font-size:6.4px;color:#a3a3a3;">西格</span></div><div style="left:6px;top:150px;width:168.3px;height:0.7px;background:#eeeeee"></div><span style="left:6px;top:156.6px;font-size:5.3px;color:#555;">7 分钟前</span><span style="right:5.2px;top:156.6px;font-size:6px;color:#3a3a3a;letter-spacing:1px;">•••</span></div>
<div style="left:1150.6px;top:450px;width:180.3px;height:169px;background:#ffffff;overflow:hidden;border-radius:1.5px;"><div style="left:0;top:0px;width:180.3px;height:24px"><span style="left:6px;top:7.6px;font-size:3.2px;color:#444;">虎嗅</span><span style="left:17.3px;top:5.6px;font-size:7.3px;color:#1c1c1c;font-weight:bold;">虎嗅网</span><div style="left:6px;top:19.4px;width:168.3px;height:0.6px;background:#f0f0f0"></div></div><div style="left:0;top:20px;width:180.3px;height:125.4px;overflow:hidden"><span style="left:6px;top:7px;font-size:6.4px;color:#e8412f;">1</span><span style="left:16px;top:7px;font-size:6.4px;color:#2a2a2a;">多家银行宣布下调存款利率，什么信号？</span><span style="left:6px;top:19px;font-size:6.4px;color:#e8412f;">2</span><span style="left:16px;top:19px;font-size:6.4px;color:#2a2a2a;">我在淄博吃烧烤：排队九小时，差点没吃上</span><span style="left:6px;top:31px;font-size:6.4px;color:#e8412f;">3</span><span style="left:16px;top:31px;font-size:6.4px;color:#2a2a2a;">北京四中舞会上热搜，这所名校如何培养学生</span><span style="left:6px;top:43px;font-size:6.4px;color:#9a9a9a;">4</span><span style="left:16px;top:43px;font-size:6.4px;color:#2a2a2a;">哈尔滨一小区住户私拆承重墙致楼体受损，谁来</span><span style="left:16px;top:51px;font-size:6.4px;color:#2a2a2a;">担责？</span><span style="left:6px;top:63px;font-size:6.4px;color:#9a9a9a;">5</span><span style="left:16px;top:63px;font-size:6.4px;color:#2a2a2a;">高铁，究竟带来了什么？</span><span style="left:6px;top:75px;font-size:6.4px;color:#9a9a9a;">6</span><span style="left:16px;top:75px;font-size:6.4px;color:#2a2a2a;">字节退守大本营</span><span style="left:6px;top:87px;font-size:6.4px;color:#9a9a9a;">7</span><span style="left:16px;top:87px;font-size:6.4px;color:#2a2a2a;">比断亲晚了三年，智己还能出坦活？</span><span style="left:6px;top:100px;font-size:6.4px;color:#9a9a9a;">8</span><span style="left:16px;top:100px;font-size:6.4px;color:#9a9a9a;">学历贬值这事，才刚刚开始</span><span style="left:6px;top:111px;font-size:6.4px;color:#9a9a9a;">9</span><span style="left:16px;top:111px;font-size:6.4px;color:#2a2a2a;">身价1.45万亿，LV背后的天使与"野蛮人"</span><span style="left:6px;top:123px;font-size:6.4px;color:#9a9a9a;">10</span><span style="left:16px;top:123px;font-size:6.4px;color:#2a2a2a;">那个在太空中给地球拍照的视频</span></div><div style="left:6px;top:150px;width:168.3px;height:0.7px;background:#eeeeee"></div><span style="left:6px;top:156.6px;font-size:5.3px;color:#555;">7 分钟前</span><span style="right:5.2px;top:156.6px;font-size:6px;color:#3a3a3a;letter-spacing:1px;">•••</span></div>
<span style="left:774px;top:640.8px;font-size:5.3px;color:#777;">娱乐</span>
<div style="left:774px;top:654.4px;width:180.3px;height:40px;background:#ffffff;overflow:hidden;border-radius:1.5px;"><div style="left:0;top:-1px;width:180.3px;height:24px"><div style="left:6px;top:4.4px;width:9.4px;height:9.4px;border-radius:4.7px;background:#e8687a;border:0.8px solid #f4a5b0"></div><span style="left:17.3px;top:5.6px;font-size:7.3px;color:#1c1c1c;font-weight:bold;">哔哩哔哩</span><span style="right:6px;top:7.6px;font-size:6.4px;color:#333;border-bottom:1.2px solid #c2c2c2;padding-bottom:4px;">全站日榜</span><div style="left:6px;top:19.4px;width:168.3px;height:0.6px;background:#f0f0f0"></div></div><div style="left:0;top:20.6px;width:180.3px;height:1px;overflow:hidden"></div></div>
<div style="left:962.3px;top:654.4px;width:180.3px;height:40px;background:#ffffff;overflow:hidden;border-radius:1.5px;"><div style="left:0;top:-1px;width:180.3px;height:24px"><div style="left:6px;top:4.4px;width:9.4px;height:9.4px;border-radius:4.7px;background:#161616"></div><span style="left:8.6px;top:6px;font-size:5.6px;color:#fff;">♪</span><span style="left:17.3px;top:5.6px;font-size:7.3px;color:#1c1c1c;font-weight:bold;">抖音</span><span style="right:6px;top:7.6px;font-size:6.4px;color:#333;border-bottom:1.2px solid #c2c2c2;padding-bottom:4px;">热门视频榜</span><div style="left:6px;top:19.4px;width:168.3px;height:0.6px;background:#f0f0f0"></div></div><div style="left:0;top:20.6px;width:180.3px;height:1px;overflow:hidden"></div></div>
<div style="left:1150.6px;top:654.4px;width:180.3px;height:40px;background:#ffffff;overflow:hidden;border-radius:1.5px;"><div style="left:0;top:-1px;width:180.3px;height:24px"><div style="left:6px;top:4.6px;width:9px;height:9px;border-radius:4.5px;background:#f8d41c;border:1.3px solid #1a1a1a"></div><span style="left:17.3px;top:5.6px;font-size:7.3px;color:#1c1c1c;font-weight:bold;">煎蛋</span><div style="left:6px;top:19.4px;width:168.3px;height:0.6px;background:#f0f0f0"></div></div><div style="left:0;top:20.6px;width:180.3px;height:1px;overflow:hidden"></div></div>
<div style="left:766px;top:300px;width:502px;height:46.6px;background:rgba(245,246,247,0.96);box-shadow:0 0.8px 2px rgba(0,0,0,0.13);"></div>
<svg style="left:774.6px;top:309.6px" width="10" height="10.2" viewBox="0 0 20 20"><path d="M1 0.5H11.5Q18 0.5 18 6.6Q18 11 14 12.2L19 19.5H13L8.8 12.8H6.2V19.5H1Z M6.2 4.8V8.6H10.6Q12.8 8.6 12.8 6.7Q12.8 4.8 10.6 4.8Z" fill="#e5283a" fill-rule="evenodd"/></svg>
<span style="left:790.1px;top:311.8px;font-size:6.3px;color:#333;">今日热榜</span>
<div style="left:908.7px;top:305.8px;width:360px;height:16.8px;background:#c9c9c9;"></div>
<svg style="left:919.6px;top:310.2px" width="8" height="8.4" viewBox="0 0 16 17"><circle cx="7" cy="7" r="5.6" stroke="#8a8a8a" stroke-width="1.2" fill="none"/><path d="M11 11.4L15 15.8" stroke="#8a8a8a" stroke-width="1.3"/></svg>
<span style="left:936px;top:310.6px;font-size:7.2px;color:#dedede;">搜索内容和节点</span>
<span style="left:869.5px;width:200px;text-align:center;top:334.6px;font-size:5.6px;color:#222;font-weight:bold;">首页</span>
<span style="left:901.65px;width:200px;text-align:center;top:334.6px;font-size:5.6px;color:#8c8c8c;">综合</span>
<span style="left:933.8px;width:200px;text-align:center;top:334.6px;font-size:5.6px;color:#8c8c8c;">科技</span>
<span style="left:965.95px;width:200px;text-align:center;top:334.6px;font-size:5.6px;color:#8c8c8c;">娱乐</span>
<span style="left:998.1px;width:200px;text-align:center;top:334.6px;font-size:5.6px;color:#8c8c8c;">社区</span>
<span style="left:1030.25px;width:200px;text-align:center;top:334.6px;font-size:5.6px;color:#8c8c8c;">购物</span>
<span style="left:1062.4px;width:200px;text-align:center;top:334.6px;font-size:5.6px;color:#8c8c8c;">财经</span>
<span style="left:1094.55px;width:200px;text-align:center;top:334.6px;font-size:5.6px;color:#8c8c8c;">开发</span>
<span style="left:1126.7px;width:200px;text-align:center;top:334.6px;font-size:5.6px;color:#8c8c8c;">校务</span>
<span style="left:1158.85px;width:200px;text-align:center;top:334.6px;font-size:5.6px;color:#8c8c8c;">政务</span>
<div style="left:954px;top:345.7px;width:32px;height:0.9px;background:#c9c9c9;"></div>
<div style="left:766px;top:260px;width:502px;height:14px;background:#e7e8ec;"></div>
<div style="left:865px;top:261.6px;width:96.4px;height:12.6px;background:#ffffff;border-radius:3px 3px 0 0;"></div>
<div style="left:774.2px;top:264.6px;width:4.8px;height:5.4px;background:#3d8be8;border-radius:1.4px;"></div>
<div style="left:775.4px;top:266px;width:2.4px;height:2.4px;background:#dee1e6;border-radius:1.2px;"></div>
<span style="left:783.6px;top:265.7px;font-size:4.8px;color:#444;">百度一下，你就知道</span>
<svg style="left:857px;top:265.4px" width="3.8" height="3.8" viewBox="0 0 6 6"><path d="M0.6 0.6L5.4 5.4M5.4 0.6L0.6 5.4" stroke="#333" stroke-width="0.9"/></svg>
<svg style="left:870.4px;top:264.4px" width="5.6" height="5.8" viewBox="0 0 20 20"><path d="M1 0.5H11.5Q18 0.5 18 6.6Q18 11 14 12.2L19 19.5H13L8.8 12.8H6.2V19.5H1Z M6.2 4.8V8.6H10.6Q12.8 8.6 12.8 6.7Q12.8 4.8 10.6 4.8Z" fill="#e5283a" fill-rule="evenodd"/></svg>
<span style="left:879.3px;top:265.7px;font-size:4.8px;color:#444;">今日热榜官网</span>
<svg style="left:952.9px;top:265.4px" width="3.8" height="3.8" viewBox="0 0 6 6"><path d="M0.6 0.6L5.4 5.4M5.4 0.6L0.6 5.4" stroke="#333" stroke-width="0.9"/></svg>
<svg style="left:967px;top:264.6px" width="5.2" height="5.2" viewBox="0 0 8 8"><path d="M4 0.5V7.5M0.5 4H7.5" stroke="#333" stroke-width="1"/></svg>
<div style="left:766px;top:274px;width:502px;height:12.9px;background:#ffffff;"></div>
<svg style="left:771.6px;top:278.4px" width="6" height="5.6" viewBox="0 0 12 11"><path d="M11 5.5H1.5M5.5 1L1 5.5L5.5 10" stroke="#333" stroke-width="1.5" fill="none"/></svg>
<svg style="left:784.4px;top:278.4px" width="6" height="5.6" viewBox="0 0 12 11"><path d="M1 5.5H10.5M6.5 1L11 5.5L6.5 10" stroke="#b4b4b4" stroke-width="1.5" fill="none"/></svg>
<svg style="left:797.4px;top:278px" width="6.2" height="6.4" viewBox="0 0 12 12"><path d="M10.4 6A4.4 4.4 0 1 1 8.8 2.6" stroke="#333" stroke-width="1.5" fill="none"/><path d="M7.4 0.6H10.8V4Z" fill="#333"/></svg>
<div style="left:809.2px;top:275.4px;width:470px;height:10.8px;background:#f1f3f4;border-radius:5.4px;"></div>
<div style="left:814.4px;top:280.2px;width:3px;height:2.6px;background:#444;border-radius:0.4px;"></div>
<div style="left:815px;top:278.6px;width:1.8px;height:2.4px;background:transparent;border:0.5px solid #444;border-radius:1px 1px 0 0;"></div>
<span style="left:823px;top:278.1px;font-size:6.1px;color:#2b2b2b;">tophub.today</span>
<div style="left:766px;top:286.8px;width:502px;height:13.2px;background:#f5f5f6;"></div>
<div style="left:768px;top:287.4px;width:12px;height:12.2px;background:#efe9e1;"></div>
<div style="left:780px;top:287.4px;width:41px;height:12.2px;background:#f6f6f6;"></div>
<div style="left:821px;top:287.4px;width:40px;height:12.2px;background:#e5e5e7;"></div>
<div style="left:861px;top:287.4px;width:20px;height:12.2px;background:#fbe5e8;"></div>
<div style="left:881px;top:287.4px;width:20px;height:12.2px;background:#ececee;"></div>
<div style="left:901px;top:287.4px;width:20px;height:12.2px;background:#e6e6e8;"></div>
<div style="left:921px;top:287.4px;width:20.5px;height:12.2px;background:#fce5e7;"></div>
<div style="left:941.5px;top:287.4px;width:19.5px;height:12.2px;background:#f5f5f5;"></div>
<div style="left:961px;top:287.4px;width:20px;height:12.2px;background:#ebebed;"></div>
<div style="left:981px;top:287.4px;width:20px;height:12.2px;background:#dfe4ee;"></div>
<div style="left:1001px;top:287.4px;width:40px;height:12.2px;background:#f4f4f5;"></div>
<div style="left:1041px;top:287.4px;width:20px;height:12.2px;background:#c9dbee;"></div>
<div style="left:1061px;top:287.4px;width:40px;height:12.2px;background:#eff0f1;"></div>
<div style="left:1101px;top:287.4px;width:20px;height:12.2px;background:#e3e3e5;"></div>
<div style="left:1121px;top:287.4px;width:20px;height:12.2px;background:#ebebec;"></div>
<div style="left:1141px;top:287.4px;width:41px;height:12.2px;background:#f6f6f6;"></div>
<div style="left:1182px;top:287.4px;width:20px;height:12.2px;background:#dad8d7;"></div>
<div style="left:1202px;top:287.4px;width:20px;height:12.2px;background:#f1e8e7;"></div>
<div style="left:1222px;top:287.4px;width:19.5px;height:12.2px;background:#eeeeee;"></div>
<div style="left:1241.5px;top:287.4px;width:20.5px;height:12.2px;background:#d8e6d8;"></div>
<div style="left:1262px;top:287.4px;width:6px;height:12.2px;background:#e6e6e6;"></div>
<div style="left:0px;top:676.6px;width:766px;height:16px;background:#d5dfec;"></div>
<div style="left:3px;top:680.8px;width:3.4px;height:3.4px;background:#0c0c0c;"></div>
<div style="left:7px;top:680.8px;width:3.4px;height:3.4px;background:#0c0c0c;"></div>
<div style="left:3px;top:684.8px;width:3.4px;height:3.4px;background:#0c0c0c;"></div>
<div style="left:7px;top:684.8px;width:3.4px;height:3.4px;background:#0c0c0c;"></div>
<div style="left:23.2px;top:681.6px;width:5.2px;height:6px;background:transparent;border:0.8px solid #222;"></div>
<div style="left:21.6px;top:682.8px;width:0.8px;height:3.6px;background:#222;"></div>
<div style="left:29.2px;top:682.8px;width:0.8px;height:3.6px;background:#222;"></div>
<div style="left:36.6px;top:676.6px;width:19.4px;height:16px;background:#eef3f6;"></div>
<div style="left:42px;top:680.2px;width:8.4px;height:8.2px;background:#0a1a33;border:0.7px solid #2f7fd0;border-radius:1.2px;"></div>
<span style="left:43.3px;top:682px;font-size:4.6px;color:#8ec5ff;font-weight:bold;">Ps</span>
<svg style="left:60.9px;top:679.6px" width="9.8" height="9.8" viewBox="0 0 20 20"><circle cx="10" cy="10" r="9.6" fill="#e23a2e"/><path d="M10 10L1.7 5.2A9.6 9.6 0 0 0 9 19.55Z" fill="#2da94f"/><path d="M10 10L9 19.55A9.6 9.6 0 0 0 18.3 5.2Z" fill="#f8bd1a"/><path d="M10 10L18.3 5.2A9.6 9.6 0 0 0 1.7 5.2Z" fill="#e23a2e"/><circle cx="10" cy="10" r="4.6" fill="#fff"/><circle cx="10" cy="10" r="3.6" fill="#3b7ded"/></svg>
<div style="left:80.8px;top:681px;width:9px;height:6.4px;background:#f6c34c;border-radius:0.6px;"></div>
<div style="left:80.8px;top:680px;width:4px;height:1.6px;background:#e8a92e;"></div>
<div style="left:82.2px;top:684.4px;width:6.2px;height:3.6px;background:#3f8fdc;"></div>
<div style="left:83.8px;top:686px;width:3px;height:2.4px;background:#d9ecfa;"></div>
<svg style="left:100px;top:680.4px" width="10" height="8" viewBox="0 0 20 16"><path d="M0 1H4.2L6.2 9.6L8.6 3.4H11.4L13.8 9.6L15.8 1H20L15.6 15H12.4L10 8.2L7.6 15H4.4Z" fill="#e8201c"/></svg>
<div style="left:119.8px;top:680.4px;width:7.2px;height:6.2px;background:#23c463;border-radius:3.6px/3.1px;"></div>
<div style="left:124px;top:684.6px;width:5.4px;height:4.2px;background:#ececec;border-radius:2px;"></div>
<div style="left:37.6px;top:692px;width:17.4px;height:0.8px;background:#0f5c96;"></div>
<div style="left:57.8px;top:692px;width:17.4px;height:0.8px;background:#0f5c96;"></div>
<div style="left:77.4px;top:692px;width:17.4px;height:0.8px;background:#0f5c96;"></div>
<div style="left:97px;top:692px;width:17.4px;height:0.8px;background:#0f5c96;"></div>
<div style="left:116.6px;top:692px;width:17.4px;height:0.8px;background:#0f5c96;"></div>
<div style="left:766px;top:676.6px;width:502px;height:16px;background:#d3e7f0;"></div>
<div style="left:771.6px;top:680.8px;width:3.4px;height:3.4px;background:#0c0c0c;"></div>
<div style="left:775.6px;top:680.8px;width:3.4px;height:3.4px;background:#0c0c0c;"></div>
<div style="left:771.6px;top:684.8px;width:3.4px;height:3.4px;background:#0c0c0c;"></div>
<div style="left:775.6px;top:684.8px;width:3.4px;height:3.4px;background:#0c0c0c;"></div>
<div style="left:791.8px;top:681.6px;width:5.2px;height:6px;background:transparent;border:0.8px solid #222;"></div>
<div style="left:790.2px;top:682.8px;width:0.8px;height:3.6px;background:#222;"></div>
<div style="left:797.8px;top:682.8px;width:0.8px;height:3.6px;background:#222;"></div>
<div style="left:805.2px;top:676.6px;width:19.4px;height:16px;background:#eef3f6;"></div>
<div style="left:810.6px;top:680.2px;width:8.4px;height:8.2px;background:#0a1a33;border:0.7px solid #2f7fd0;border-radius:1.2px;"></div>
<span style="left:811.9px;top:682px;font-size:4.6px;color:#8ec5ff;font-weight:bold;">Ps</span>
<svg style="left:829.5px;top:679.6px" width="9.8" height="9.8" viewBox="0 0 20 20"><circle cx="10" cy="10" r="9.6" fill="#e23a2e"/><path d="M10 10L1.7 5.2A9.6 9.6 0 0 0 9 19.55Z" fill="#2da94f"/><path d="M10 10L9 19.55A9.6 9.6 0 0 0 18.3 5.2Z" fill="#f8bd1a"/><path d="M10 10L18.3 5.2A9.6 9.6 0 0 0 1.7 5.2Z" fill="#e23a2e"/><circle cx="10" cy="10" r="4.6" fill="#fff"/><circle cx="10" cy="10" r="3.6" fill="#3b7ded"/></svg>
<div style="left:849.4px;top:681px;width:9px;height:6.4px;background:#f6c34c;border-radius:0.6px;"></div>
<div style="left:849.4px;top:680px;width:4px;height:1.6px;background:#e8a92e;"></div>
<div style="left:850.8px;top:684.4px;width:6.2px;height:3.6px;background:#3f8fdc;"></div>
<div style="left:852.4px;top:686px;width:3px;height:2.4px;background:#d9ecfa;"></div>
<svg style="left:868.6px;top:680.4px" width="10" height="8" viewBox="0 0 20 16"><path d="M0 1H4.2L6.2 9.6L8.6 3.4H11.4L13.8 9.6L15.8 1H20L15.6 15H12.4L10 8.2L7.6 15H4.4Z" fill="#e8201c"/></svg>
<div style="left:888.4px;top:680.4px;width:7.2px;height:6.2px;background:#23c463;border-radius:3.6px/3.1px;"></div>
<div style="left:892.6px;top:684.6px;width:5.4px;height:4.2px;background:#ececec;border-radius:2px;"></div>
<div style="left:806.2px;top:692px;width:17.4px;height:0.8px;background:#0f5c96;"></div>
<div style="left:826.4px;top:692px;width:17.4px;height:0.8px;background:#0f5c96;"></div>
<div style="left:846px;top:692px;width:17.4px;height:0.8px;background:#0f5c96;"></div>
<div style="left:865.6px;top:692px;width:17.4px;height:0.8px;background:#0f5c96;"></div>
<div style="left:885.2px;top:692px;width:17.4px;height:0.8px;background:#0f5c96;"></div>
<span style="left:745.4px;top:679px;font-size:4.7px;color:#1a1a1a;">13:40</span>
<span style="left:741.2px;top:686.7px;font-size:4.7px;color:#1a1a1a;">2023/5/8</span>
<div style="left:0px;top:692.6px;width:1268px;height:66.4px;background:#131313;"></div>
<svg style="left:706px;top:636px" width="62" height="42" viewBox="0 0 62 42">
<g stroke="#0d0d0d" stroke-width="1.5" fill="#fff" stroke-linejoin="round">
<path d="M14.7 3.6C19 3.6 21 6 21 8.6C21 11 19.6 12.6 17.6 13.2L18.6 16.4L15.4 13.6C11 13.8 8.6 11.6 8.6 8.6C8.6 6 10.6 3.6 14.7 3.6Z"/>
<path d="M46.7 6C50.6 6 52 8 52 10.2C52 12.6 50 14 47.2 14.2L44.4 17L44.8 14C42.6 13.4 41.6 12 41.6 10.2C41.6 8 43 6 46.7 6Z"/>
<path d="M8.2 17.2C11 17.2 12.6 19.2 12.6 21.6C12.6 22.8 12.2 23.6 11.8 24.2L13.6 26.4L10.6 25.6C7 26.8 4 24.6 4 21.6C4 19.2 5.6 17.2 8.2 17.2Z"/>
<path d="M53.2 19.2C56.4 19.2 57.8 21 57.8 23C57.8 25.2 56 26.8 53.2 26.8C52.2 26.8 51.4 26.6 50.8 26.4L47.6 27.4L49.6 25.2C49 24.6 48.6 23.8 48.6 23C48.6 21 50.2 19.2 53.2 19.2Z"/>
</g>
<path d="M23.2 13.8L29 18.5M38 12.5L33 18.5" stroke="#0d0d0d" stroke-width="1.4" fill="none"/>
<rect x="17.4" y="18.4" width="26.6" height="19.4" rx="1" fill="#fff" stroke="#0d0d0d" stroke-width="1.6"/>
<rect x="20.8" y="21.8" width="19.8" height="12.2" fill="#fff" stroke="#0d0d0d" stroke-width="1.7"/>
<path d="M24 26.4L27.4 24.6M37.6 26.4L34.2 24.6M26.6 28.6Q28.4 32.4 30.6 29.4Q32.8 32.4 34.8 28.6" stroke="#0d0d0d" stroke-width="1.2" fill="none"/>
<path d="M21 38L22.6 40.6L24.4 38M37 38L38.6 40.6L40.4 38" fill="#0d0d0d"/>
<path d="M12.4 8.6H17M14.7 6.6V10.8M45.4 9.4L48 10.8M7 22.4Q9.4 22 9.6 19.6M51 23H55.6" stroke="#0d0d0d" stroke-width="1" fill="none"/>
</svg>
<div style="left:1160px;top:725px;width:100px;height:22px;background:#101010;"></div>
<svg style="left:1156px;top:698px" width="112" height="52" viewBox="0 0 112 52">
<g fill="#1f3163" stroke="#1f3163" stroke-width="0.9" stroke-linejoin="round" font-family="'Liberation Sans',sans-serif" font-weight="bold" transform="skewX(-12)">
<text x="11" y="25.6" font-size="29" textLength="36" lengthAdjust="spacingAndGlyphs">4</text>
<text x="49" y="17.5" font-size="17.6" textLength="57" lengthAdjust="spacingAndGlyphs">23</text>
<text x="53" y="24.7" font-size="6.6" textLength="54" lengthAdjust="spacingAndGlyphs" stroke-width="0.4">DOWN</text>
</g>
<text x="7.7" y="44.3" font-size="23.6" font-family="'Liberation Sans',sans-serif" font-weight="bold" fill="#020202" stroke="#020202" stroke-width="0.8" textLength="94.4" lengthAdjust="spacingAndGlyphs">423down.com</text>
</svg>
</div>
</body></html>
